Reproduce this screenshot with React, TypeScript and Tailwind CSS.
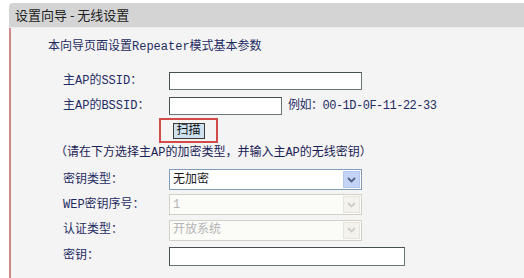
const font = "font-['Liberation_Mono','Noto_Sans_CJK_SC',monospace]"

function Chevron({ color }: { color: string }) {
  return (
    <svg width="9" height="6" viewBox="0 0 9 6">
      <path d="M1 1 L4.5 4.5 L8 1" fill="none" stroke={color} strokeWidth="1.8" />
    </svg>
  )
}

function Select({ value, disabled }: { value: string; disabled?: boolean }) {
  return (
    <div
      className={`w-[193px] h-[21px] border flex items-center justify-between pl-[3px] pr-px ${
        disabled ? 'border-[#d3d1c6] bg-[#fbfbf8] text-[#b4b4b4]' : 'border-[#7f9db9] bg-white text-[#1a1a1a]'
      }`}
    >
      <span className="leading-none">{value}</span>
      <div
        className={`w-[17px] h-[17px] flex items-center justify-center border ${
          disabled ? 'bg-[#f3f2ec] border-[#e6e4dc]' : 'bg-[#c3d4f7] border-[#b2c6f0]'
        }`}
      >
        <Chevron color={disabled ? '#cfcdc4' : '#4d6185'} />
      </div>
    </div>
  )
}

function Row({ label, children, h = 'h-[25px]' }: { label: string; children: React.ReactNode; h?: string }) {
  return (
    <div className={`flex items-center ${h} pl-[52px]`}>
      <div className="w-[106px] text-[#1f2c63]">{label}</div>
      {children}
    </div>
  )
}

export default function App() {
  return (
    <div className={`w-[524px] h-[278px] bg-white pt-[3px] pl-[9px] overflow-hidden text-[12px] ${font}`}>
      <div className="h-[24px] bg-[#d4d4d4] rounded-tl-[4px] flex items-center pl-[6px] text-[13px] text-[#222] font-['Noto_Sans_CJK_SC',sans-serif]">
        设置向导 - 无线设置
      </div>
      <div className="h-px bg-[#ebebeb]" />
      <div className="border-l-2 border-[#d08888] bg-[#f4f4f4] h-[251px] pt-[11px]">
        <div className="pl-[37px] leading-[16px] text-[#1f2c63]">本向导页面设置Repeater模式基本参数</div>
        <div className="h-[13px]" />
        <Row label="主AP的SSID：">
          <div className="w-[193px] h-[18px] bg-white border border-[#6b7575] border-t-[#465050] border-l-[#465050]" />
        </Row>
        <Row label="主AP的BSSID：">
          <div className="w-[113px] h-[18px] bg-white border border-[#6b7575] border-t-[#465050] border-l-[#465050]" />
          <span className="ml-[6px] text-[#1f2c63] tracking-[-0.5px]">例如：00-1D-0F-11-22-33</span>
        </Row>
        <div className="h-[25px] pl-[148px] flex">
          <div className="w-[59px] h-[25px] border-2 border-[#d24a4a] flex items-center justify-center">
            <div className="w-[32px] h-[16px] bg-[#cfe0ee] border border-[#3a3a3a] flex items-center justify-center leading-none text-[#111]">
              扫描
            </div>
          </div>
        </div>
        <div className="h-[24px] pl-[44px] leading-[20px] text-[#1a2255]">
          （请在下方选择主AP的加密类型，并输入主AP的无线密钥）
        </div>
        <Row label="密钥类型：">
          <Select value="无加密" />
        </Row>
        <Row label="WEP密钥序号：">
          <Select value="1" disabled />
        </Row>
        <Row label="认证类型：" h="h-[26px]">
          <Select value="开放系统" disabled />
        </Row>
        <Row label="密钥：" h="h-[26px]">
          <div className="w-[236px] h-[19px] bg-white border border-[#6b7575] border-t-[#465050] border-l-[#465050]" />
        </Row>
      </div>
    </div>
  )
}
